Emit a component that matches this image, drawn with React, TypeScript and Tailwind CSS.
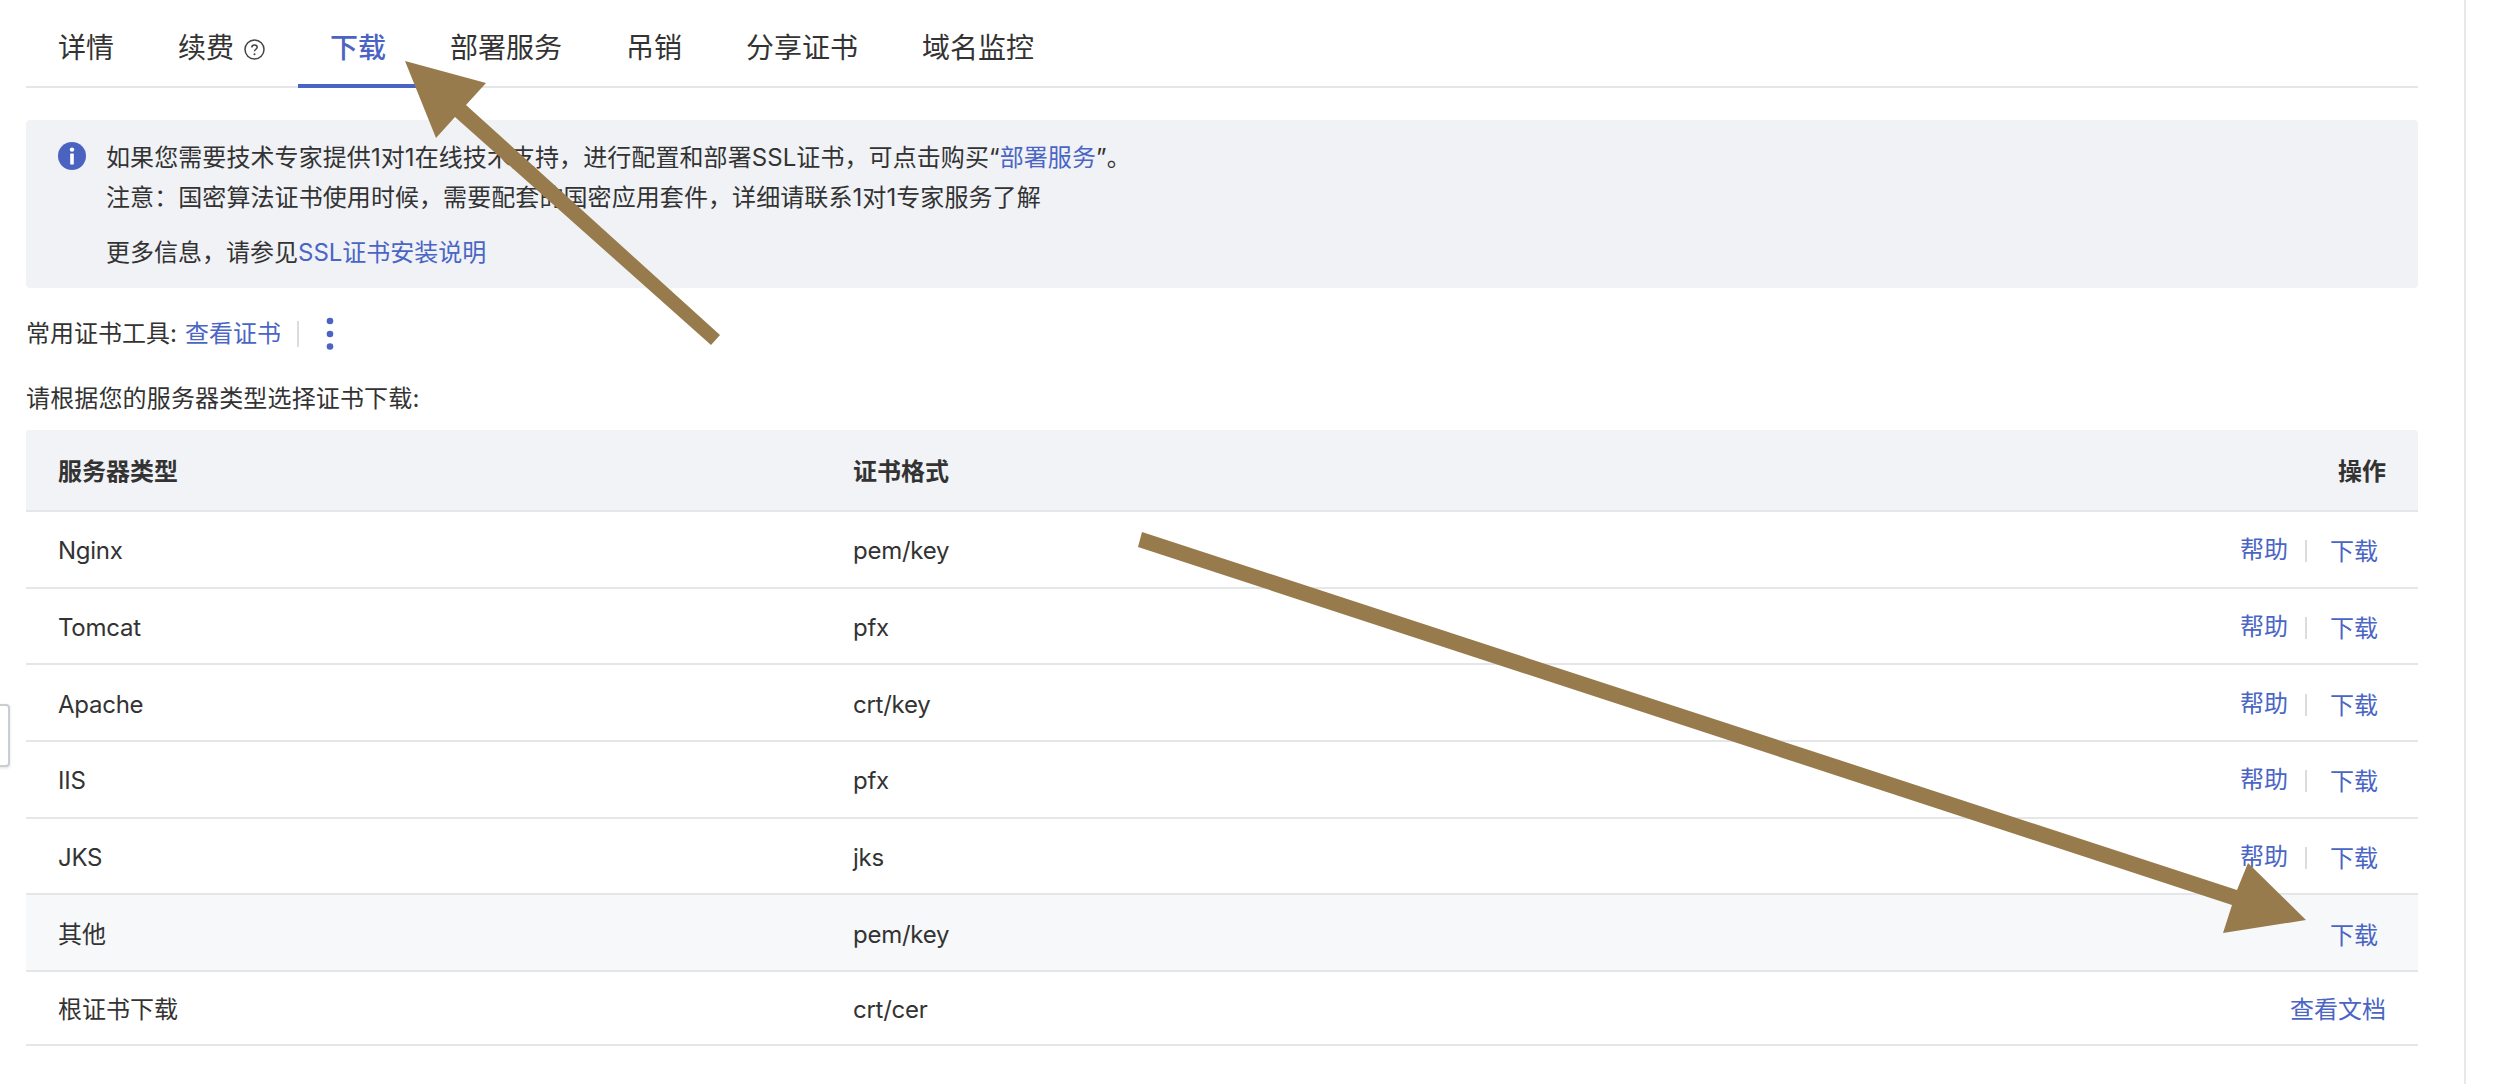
const LINK = "text-[#4a65c5]";

const tabs = ["详情", "续费", "下载", "部署服务", "吊销", "分享证书", "域名监控"];

const rows = [
  { name: "Nginx", format: "pem/key", help: true, latin: true },
  { name: "Tomcat", format: "pfx", help: true, latin: true },
  { name: "Apache", format: "crt/key", help: true, latin: true },
  { name: "IIS", format: "pfx", help: true, latin: true },
  { name: "JKS", format: "jks", help: true, latin: true },
  { name: "其他", format: "pem/key", help: false, hover: true, latin: false },
];

function HelpIcon() {
  return (
    <svg width="21" height="21" viewBox="0 0 21 21" fill="none" className="ml-[10px] mr-[1px] mt-[3px]">
      <circle cx="10.5" cy="10.5" r="9.5" stroke="#444" strokeWidth="1.5" />
      <path d="M7.8 8.4c0-1.5 1.2-2.5 2.7-2.5s2.7 1 2.7 2.4c0 1.9-2.7 2-2.7 4" stroke="#444" strokeWidth="1.5" fill="none" />
      <circle cx="10.5" cy="15.2" r="1" fill="#444" />
    </svg>
  );
}

function InfoIcon() {
  return (
    <svg width="28" height="28" viewBox="0 0 28 28" className="mt-[4px] shrink-0">
      <circle cx="14" cy="14" r="14" fill="#4a63c0" />
      <circle cx="14" cy="7.6" r="2.2" fill="#fff" />
      <rect x="12.2" y="11.6" width="3.6" height="11" rx="0.6" fill="#fff" />
    </svg>
  );
}

function Actions({ help }: { help: boolean }) {
  return (
    <div className="flex items-center justify-end pr-[8px]">
      {help && (
        <>
          <a className={`${LINK} -mt-[2px]`}>帮助</a>
          <span className="ml-[17px] mr-[23px] h-[22px] w-[2px] bg-[#dcdcdc]" />
        </>
      )}
      <a className={`${LINK} mt-[2px]`}>下载</a>
    </div>
  );
}

function Row({
  name,
  format,
  action,
  hover,
  latin,
  h,
}: {
  name: string;
  format: string;
  action: React.ReactNode;
  hover?: boolean;
  latin?: boolean;
  h: string;
}) {
  return (
    <div className={`flex items-center border-b-2 border-[#e5e6e8] pl-[33px] pr-[32px] pt-[4px] ${h} ${hover ? "bg-[#f7f8fa]" : ""}`}>
      <div className={`w-[795px] -ml-[1px] ${latin ? "tracking-[-0.25px]" : ""}`}>{name}</div>
      <div className="flex-1 tracking-[-0.25px]">{format}</div>
      <div className="w-[300px]">{action}</div>
    </div>
  );
}

function Arrows() {
  return (
    <svg className="pointer-events-none absolute left-0 top-0" width="2494" height="1084" viewBox="0 0 2494 1084">
      <polygon fill="#987b4c" points="405,61 486,83 466,105 720,335 711,345 455,117 436,138" />
      <polygon fill="#987b4c" points="1142,532 2237,890 2248,863 2306,920 2223,933 2232,905 1138,547" />
    </svg>
  );
}

export default function App() {
  return (
    <div
      className="relative flex h-[1084px] w-full overflow-hidden bg-white text-[24px] text-[#333]"
      style={{ fontFamily: 'Inter, "Noto Sans CJK SC", sans-serif' }}
    >
      <main className="h-full w-[2466px] border-r-2 border-[#e8e8e8] pl-[26px] pr-[46px]">
        <nav className="flex h-[88px] border-b-2 border-[#e5e6e8] text-[28px]">
          {tabs.map((t) => (
            <div
              key={t}
              className={`-mb-[2px] flex h-[88px] items-center border-b-4 px-[32px] pt-[12px] ${
                t === "下载" ? "border-[#4a63c4] font-medium text-[#4a63c4]" : "border-transparent"
              }`}
            >
              <span>{t}</span>
              {t === "续费" && <HelpIcon />}
            </div>
          ))}
        </nav>

        <section className="mt-[32px] flex h-[168px] gap-[20px] rounded-[4px] bg-[#f0f2f6] pl-[32px] pt-[18px] leading-[40px]">
          <InfoIcon />
          <div>
            <p className="tracking-[0.08px]">
              如果您需要技术专家提供1对1在线技术支持，进行配置和部署SSL证书，可点击购买“<a className={LINK}>部署服务</a>”。
            </p>
            <p className="tracking-[0.08px]">注意：国密算法证书使用时候，需要配套的国密应用套件，详细请联系1对1专家服务了解</p>
            <p className="mt-[15px]">
              更多信息，请参见<a className={LINK}>SSL证书安装说明</a>
            </p>
          </div>
        </section>

        <div className="mt-[27px] flex h-[38px] items-center">
          <span>常用证书工具:</span>
          <a className={`${LINK} ml-[8px]`}>查看证书</a>
          <span className="ml-[16px] h-[26px] w-[2px] bg-[#dcdcdc]" />
          <svg width="8" height="34" viewBox="0 0 8 34" className="ml-[27px]" fill="#4a63c4">
            <circle cx="4" cy="4" r="3.3" />
            <circle cx="4" cy="17" r="3.3" />
            <circle cx="4" cy="29.5" r="3.3" />
          </svg>
        </div>

        <p className="mt-[27px] h-[38px] leading-[38px] tracking-[0.15px]">请根据您的服务器类型选择证书下载:</p>

        <div className="mt-[12px]">
          <div className="flex h-[82px] items-center rounded-t-[4px] border-b-2 border-[#e5e6e8] bg-[#f1f3f7] pl-[33px] pr-[32px] pt-[3px] font-bold">
            <div className="w-[795px] -ml-[1px]">服务器类型</div>
            <div className="flex-1">证书格式</div>
            <div className="w-[300px] text-right">操作</div>
          </div>
          {rows.map((r) => (
            <Row
              key={r.name}
              name={r.name}
              format={r.format}
              hover={r.hover}
              latin={r.latin}
              h="h-[76.67px]"
              action={<Actions help={r.help} />}
            />
          ))}
          <Row
            name="根证书下载"
            format="crt/cer"
            h="h-[74px]"
            action={
              <div className="text-right">
                <a className={LINK}>查看文档</a>
              </div>
            }
          />
        </div>
      </main>

      <div className="absolute -left-[4px] top-[704px] h-[63px] w-[14px] rounded-[4px] border-2 border-[#c9cdd4] bg-white shadow-[0_1px_3px_rgba(0,0,0,0.12)]" />
      <Arrows />
    </div>
  );
}
